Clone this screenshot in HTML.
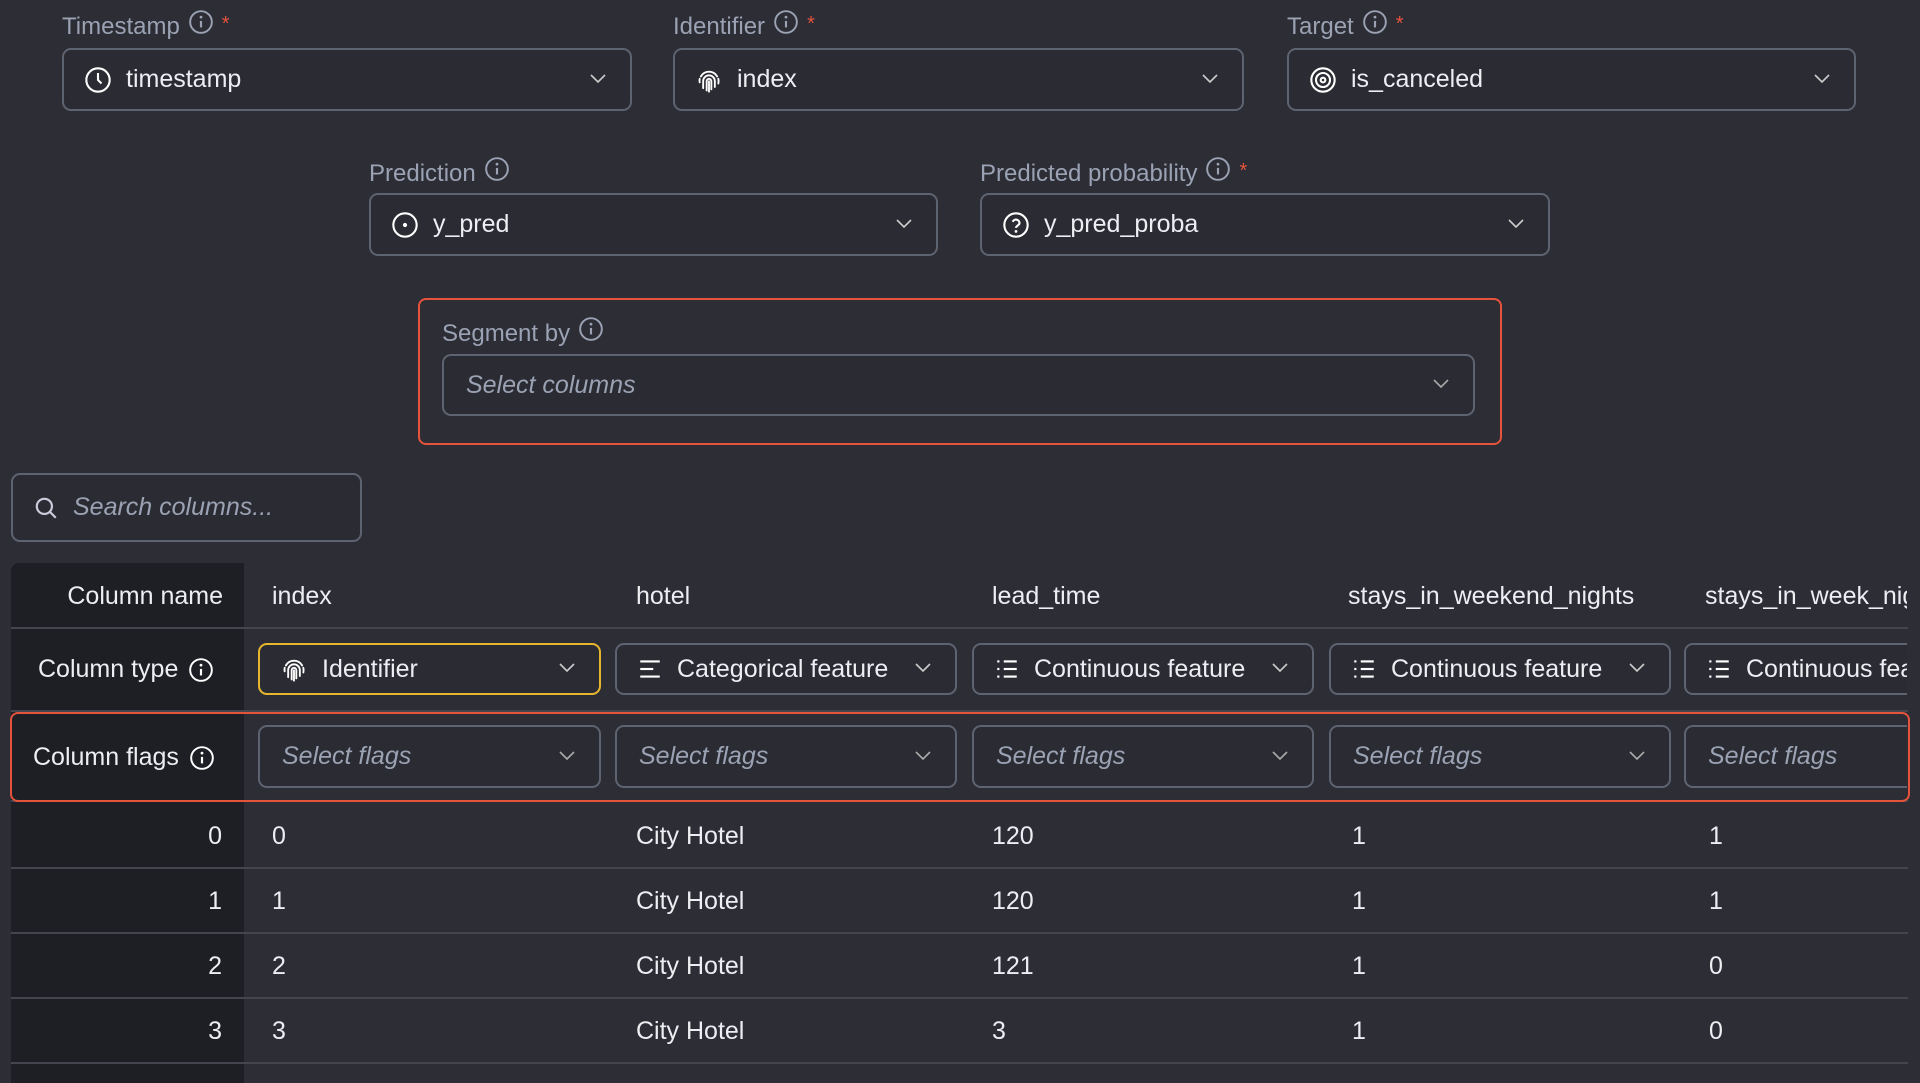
<!DOCTYPE html>
<html><head><meta charset="utf-8">
<style>
*{box-sizing:border-box;margin:0;padding:0}
body{width:1920px;height:1080px;background:#2c2d35;font-family:"Liberation Sans",sans-serif;color:#e8e9ee;position:relative;overflow:hidden}
.a{position:absolute}
.lbl{position:absolute;font-size:24px;color:#9aa2b3;white-space:nowrap;display:flex;align-items:center}
.lbl svg{margin-left:8px;position:relative;top:-5px}
.star{color:#e5533d;margin-left:8px;font-size:20px;position:relative;top:-3px}
.sel{position:absolute;border:2px solid #5d6370;border-radius:9px;display:flex;align-items:center;font-size:25px;color:#eceef2;background:#2b2c33}
.sel .ic{margin-left:20px;margin-right:14px;display:flex}
.sel .chev{position:absolute;right:24px;top:50%;margin-top:-6px}
.ph{font-style:italic;color:#9aa2b3}
.cell{position:absolute;font-size:25px;color:#eceef2;white-space:nowrap}
.hl{position:absolute;left:244px;right:12px;height:2px;background:#43464f}
</style></head><body>
<svg width="0" height="0" style="position:absolute">
<defs>
<symbol id="info" viewBox="0 0 24 24"><circle cx="12" cy="12" r="10" fill="none" stroke="currentColor" stroke-width="1.8"/><line x1="12" y1="11" x2="12" y2="17" stroke="currentColor" stroke-width="2"/><circle cx="12" cy="7.5" r="1.3" fill="currentColor"/></symbol>
<symbol id="chev" viewBox="0 0 16 10"><path d="M1 1l7 7 7-7" fill="none" stroke="currentColor" stroke-width="1.6"/></symbol>
<symbol id="fp" viewBox="0 0 24 24"><g fill="none" stroke="currentColor" stroke-width="1.6" stroke-linecap="round"><path d="M5 9a8 8 0 0 1 14 0"/><path d="M4 14a8 8 0 0 1 0-3M20 11a8 8 0 0 1 0 4"/><path d="M7 19v-6a5 5 0 0 1 10 0v5"/><path d="M10 21v-8a2 2 0 0 1 4 0v7"/><path d="M12 13v9"/></g></symbol>
<symbol id="list" viewBox="0 0 24 24"><g stroke="currentColor" stroke-width="2"><line x1="9" y1="5" x2="21" y2="5"/><line x1="9" y1="12" x2="21" y2="12"/><line x1="9" y1="19" x2="21" y2="19"/><line x1="3" y1="5" x2="5" y2="5"/><line x1="3" y1="12" x2="5" y2="12"/><line x1="3" y1="19" x2="5" y2="19"/></g></symbol>
<symbol id="cat" viewBox="0 0 24 24"><g stroke="currentColor" stroke-width="2"><line x1="3" y1="5" x2="21" y2="5"/><line x1="3" y1="12" x2="15" y2="12"/><line x1="3" y1="19" x2="21" y2="19"/></g></symbol>
</defs></svg>

<div class="lbl" style="left:62px;top:13px">Timestamp<svg width="26" height="26" style="color:#9aa2b3"><use href="#info"/></svg><span class="star">*</span></div>
<div class="lbl" style="left:673px;top:13px">Identifier<svg width="26" height="26" style="color:#9aa2b3"><use href="#info"/></svg><span class="star">*</span></div>
<div class="lbl" style="left:1287px;top:13px">Target<svg width="26" height="26" style="color:#9aa2b3"><use href="#info"/></svg><span class="star">*</span></div>

<div class="sel" style="left:62px;top:48px;width:570px;height:63px"><span class="ic"><svg width="28" height="28" viewBox="0 0 24 24"><circle cx="12" cy="12" r="10" fill="none" stroke="#fff" stroke-width="1.8"/><path d="M12 6v6l3 3" fill="none" stroke="#fff" stroke-width="1.8"/></svg></span>timestamp<svg class="chev" width="16" height="10" style="color:#ccc"><use href="#chev"/></svg></div>
<div class="sel" style="left:673px;top:48px;width:571px;height:63px"><span class="ic"><svg width="28" height="28" style="color:#fff"><use href="#fp"/></svg></span>index<svg class="chev" width="16" height="10" style="color:#ccc"><use href="#chev"/></svg></div>
<div class="sel" style="left:1287px;top:48px;width:569px;height:63px"><span class="ic"><svg width="28" height="28" viewBox="0 0 24 24" fill="none" stroke="#fff" stroke-width="1.8"><circle cx="12" cy="12" r="10"/><circle cx="12" cy="12" r="6"/><circle cx="12" cy="12" r="2"/></svg></span>is_canceled<svg class="chev" width="16" height="10" style="color:#ccc"><use href="#chev"/></svg></div>

<div class="lbl" style="left:369px;top:160px">Prediction<svg width="26" height="26" style="color:#9aa2b3"><use href="#info"/></svg></div>
<div class="lbl" style="left:980px;top:160px">Predicted probability<svg width="26" height="26" style="color:#9aa2b3"><use href="#info"/></svg><span class="star">*</span></div>
<div class="sel" style="left:369px;top:193px;width:569px;height:63px"><span class="ic"><svg width="28" height="28" viewBox="0 0 24 24"><circle cx="12" cy="12" r="10" fill="none" stroke="#fff" stroke-width="1.8"/><circle cx="12" cy="12" r="1.8" fill="#fff"/></svg></span>y_pred<svg class="chev" width="16" height="10" style="color:#ccc"><use href="#chev"/></svg></div>
<div class="sel" style="left:980px;top:193px;width:570px;height:63px"><span class="ic"><svg width="28" height="28" viewBox="0 0 24 24"><circle cx="12" cy="12" r="10" fill="none" stroke="#fff" stroke-width="1.8"/><path d="M9.2 9.3a3 3 0 0 1 5.8 1c0 2-3 2.3-3 4.2" fill="none" stroke="#fff" stroke-width="1.8"/><circle cx="12" cy="17.5" r="1.2" fill="#fff"/></svg></span>y_pred_proba<svg class="chev" width="16" height="10" style="color:#ccc"><use href="#chev"/></svg></div>

<div class="a" style="left:418px;top:298px;width:1084px;height:147px;border:2px solid #e5533d;border-radius:8px"></div>
<div class="lbl" style="left:442px;top:320px">Segment by<svg width="26" height="26" style="color:#9aa2b3"><use href="#info"/></svg></div>
<div class="sel" style="left:442px;top:354px;width:1033px;height:62px"><span class="ph" style="margin-left:22px">Select columns</span><svg class="chev" width="16" height="10" style="color:#aaa"><use href="#chev"/></svg></div>

<div class="sel" style="left:11px;top:473px;width:351px;height:69px"><span class="ic"><svg width="26" height="26" viewBox="0 0 24 24" fill="none" stroke="#ccd" stroke-width="2"><circle cx="10.5" cy="10.5" r="7"/><line x1="15.5" y1="15.5" x2="21" y2="21"/></svg></span><span class="ph">Search columns...</span></div>

<div class="a" style="left:11px;top:563px;width:233px;height:520px;background:#1e1f25;border-radius:8px 0 0 0"></div>
<div class="hl" style="top:627px;left:11px"></div>
<div class="hl" style="top:710px;left:11px"></div>
<div class="hl" style="top:800px;left:11px"></div>
<div class="hl" style="top:867px;left:11px"></div>
<div class="hl" style="top:932px;left:11px"></div>
<div class="hl" style="top:997px;left:11px"></div>
<div class="hl" style="top:1062px;left:11px"></div>
<div class="a" style="left:10px;top:712px;width:1900px;height:90px;border:2px solid #e5533d;border-radius:8px"></div>

<div class="cell" style="right:1697px;top:582px;font-weight:500">Column name</div>
<div class="cell" style="left:38px;top:655px;display:flex;align-items:center">Column type<svg width="26" height="26" style="color:#fff;margin-left:10px"><use href="#info"/></svg></div>
<div class="cell" style="left:33px;top:743px;display:flex;align-items:center">Column flags<svg width="26" height="26" style="color:#fff;margin-left:10px"><use href="#info"/></svg></div>

<div class="cell" style="left:272px;top:582px">index</div>
<div class="cell" style="left:636px;top:582px">hotel</div>
<div class="cell" style="left:992px;top:582px">lead_time</div>
<div class="cell" style="left:1348px;top:582px">stays_in_weekend_nights</div>
<div class="a" style="left:1705px;top:582px;width:202px;overflow:hidden;height:40px"><div class="cell" style="position:static">stays_in_week_nights</div></div>

<div class="sel" style="left:258px;top:643px;width:343px;height:52px;border-color:#e7b62f"><span class="ic"><svg width="28" height="28" style="color:#fff"><use href="#fp"/></svg></span>Identifier<svg class="chev" width="16" height="10" style="color:#ccc"><use href="#chev"/></svg></div>
<div class="sel" style="left:615px;top:643px;width:342px;height:52px"><span class="ic"><svg width="26" height="26" style="color:#fff"><use href="#cat"/></svg></span>Categorical feature<svg class="chev" width="16" height="10" style="color:#ccc"><use href="#chev"/></svg></div>
<div class="sel" style="left:972px;top:643px;width:342px;height:52px"><span class="ic"><svg width="26" height="26" style="color:#fff"><use href="#list"/></svg></span>Continuous feature<svg class="chev" width="16" height="10" style="color:#ccc"><use href="#chev"/></svg></div>
<div class="sel" style="left:1329px;top:643px;width:342px;height:52px"><span class="ic"><svg width="26" height="26" style="color:#fff"><use href="#list"/></svg></span>Continuous feature<svg class="chev" width="16" height="10" style="color:#ccc"><use href="#chev"/></svg></div>
<div class="a" style="left:1684px;top:643px;width:223px;height:52px;overflow:hidden"><div class="sel" style="left:0;top:0;width:342px;height:52px;white-space:nowrap"><span class="ic"><svg width="26" height="26" style="color:#fff"><use href="#list"/></svg></span>Continuous feature</div></div>

<div class="sel" style="left:258px;top:725px;width:343px;height:63px"><span class="ph" style="margin-left:22px">Select flags</span><svg class="chev" width="16" height="10" style="color:#aaa"><use href="#chev"/></svg></div>
<div class="sel" style="left:615px;top:725px;width:342px;height:63px"><span class="ph" style="margin-left:22px">Select flags</span><svg class="chev" width="16" height="10" style="color:#aaa"><use href="#chev"/></svg></div>
<div class="sel" style="left:972px;top:725px;width:342px;height:63px"><span class="ph" style="margin-left:22px">Select flags</span><svg class="chev" width="16" height="10" style="color:#aaa"><use href="#chev"/></svg></div>
<div class="sel" style="left:1329px;top:725px;width:342px;height:63px"><span class="ph" style="margin-left:22px">Select flags</span><svg class="chev" width="16" height="10" style="color:#aaa"><use href="#chev"/></svg></div>
<div class="a" style="left:1684px;top:725px;width:223px;height:63px;overflow:hidden"><div class="sel" style="left:0;top:0;width:342px;height:63px"><span class="ph" style="margin-left:22px">Select flags</span></div></div>

<div class="cell" style="right:1698px;top:822px">0</div>
<div class="cell" style="left:272px;top:822px">0</div><div class="cell" style="left:636px;top:822px">City Hotel</div><div class="cell" style="left:992px;top:822px">120</div><div class="cell" style="left:1352px;top:822px">1</div><div class="cell" style="left:1709px;top:822px">1</div>
<div class="cell" style="right:1698px;top:887px">1</div>
<div class="cell" style="left:272px;top:887px">1</div><div class="cell" style="left:636px;top:887px">City Hotel</div><div class="cell" style="left:992px;top:887px">120</div><div class="cell" style="left:1352px;top:887px">1</div><div class="cell" style="left:1709px;top:887px">1</div>
<div class="cell" style="right:1698px;top:952px">2</div>
<div class="cell" style="left:272px;top:952px">2</div><div class="cell" style="left:636px;top:952px">City Hotel</div><div class="cell" style="left:992px;top:952px">121</div><div class="cell" style="left:1352px;top:952px">1</div><div class="cell" style="left:1709px;top:952px">0</div>
<div class="cell" style="right:1698px;top:1017px">3</div>
<div class="cell" style="left:272px;top:1017px">3</div><div class="cell" style="left:636px;top:1017px">City Hotel</div><div class="cell" style="left:992px;top:1017px">3</div><div class="cell" style="left:1352px;top:1017px">1</div><div class="cell" style="left:1709px;top:1017px">0</div>
</body></html>
